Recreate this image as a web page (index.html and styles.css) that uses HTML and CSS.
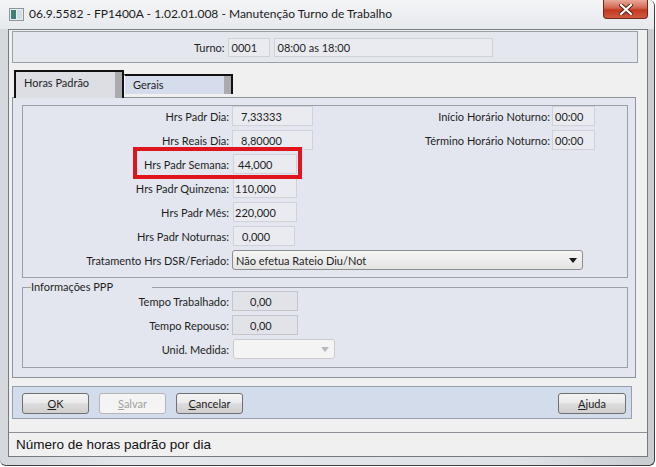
FILE: index.html
```html
<!DOCTYPE html>
<html lang="pt">
<head>
    <meta charset="UTF-8">
    <title>Manutenção Turno de Trabalho</title>
    <link rel="stylesheet" href="styles.css">
</head>
<body>
    <div class="window">
        <div class="titlebar">
            <svg class="app-icon" width="15" height="13" viewBox="0 0 15 13">
                <rect x="0.5" y="0.5" width="14" height="12" fill="#e9eef0" stroke="#8a9599"/>
                <rect x="2" y="2" width="5" height="9" fill="#3f7f78"/>
                <rect x="8" y="2" width="5" height="9" fill="#d2dde0"/>
            </svg>
            <span class="title">06.9.5582 - FP1400A - 1.02.01.008 - Manutenção Turno de Trabalho</span>
            <div class="close-btn">
                <svg width="14" height="11" viewBox="0 0 14 11">
                    <path d="M2 1 L12 10 M12 1 L2 10" stroke="#5a1a10" stroke-width="4" stroke-linecap="square"/>
                    <path d="M2 1 L12 10 M12 1 L2 10" stroke="#ffffff" stroke-width="2.2" stroke-linecap="square"/>
                </svg>
            </div>
        </div>

        <div class="client">
            <div class="turno-panel">
                <span class="label">Turno:</span>
                <div class="field turno-code">0001</div>
                <div class="field turno-desc">08:00 as 18:00</div>
            </div>

            <div class="tabs">
                <div class="tab active">Horas Padrão</div>
                <div class="tab">Gerais</div>
            </div>

            <div class="tab-page">
                <div class="box-hours">
                    <div class="hours-top">
                        <div class="col-left">
                            <div class="form-row">
                                <span class="label">Hrs Padr Dia:</span>
                                <div class="field wide pad-8">7,33333</div>
                            </div>
                            <div class="form-row">
                                <span class="label">Hrs Reais Dia:</span>
                                <div class="field wide pad-8">8,80000</div>
                            </div>
                            <div class="form-row">
                                <span class="label">Hrs Padr Semana:</span>
                                <div class="field mid pad-4">44,000</div>
                            </div>
                            <div class="form-row">
                                <span class="label">Hrs Padr Quinzena:</span>
                                <div class="field mid pad-2">110,000</div>
                            </div>
                            <div class="form-row">
                                <span class="label">Hrs Padr Mês:</span>
                                <div class="field mid pad-2">220,000</div>
                            </div>
                            <div class="form-row">
                                <span class="label">Hrs Padr Noturnas:</span>
                                <div class="field mid narrow pad-8">0,000</div>
                            </div>
                        </div>
                        <div class="col-right">
                            <div class="form-row">
                                <span class="label">Início Horário Noturno:</span>
                                <div class="field time">00:00</div>
                            </div>
                            <div class="form-row">
                                <span class="label">Término Horário Noturno:</span>
                                <div class="field time">00:00</div>
                            </div>
                        </div>
                    </div>
                    <div class="form-row last">
                        <span class="label">Tratamento Hrs DSR/Feriado:</span>
                        <div class="combo">
                            <span>Não efetua Rateio Diu/Not</span>
                            <span class="arrow"></span>
                        </div>
                    </div>
                    <div class="highlight"></div>
                </div>

                <div class="group">
                    <span class="group-title">Informações PPP</span>
                    <div class="form-row">
                        <span class="label">Tempo Trabalhado:</span>
                        <div class="field ppp">0,00</div>
                    </div>
                    <div class="form-row">
                        <span class="label">Tempo Repouso:</span>
                        <div class="field ppp">0,00</div>
                    </div>
                    <div class="form-row last">
                        <span class="label">Unid. Medida:</span>
                        <div class="combo disabled">
                            <span></span>
                            <span class="arrow"></span>
                        </div>
                    </div>
                </div>
            </div>

            <div class="button-bar">
                <button class="btn"><u>O</u>K</button>
                <button class="btn" disabled><u>S</u>alvar</button>
                <button class="btn"><u>C</u>ancelar</button>
                <button class="btn help"><u>A</u>juda</button>
            </div>

            <div class="status">Número de horas padrão por dia</div>
        </div>
    </div>
</body>
</html>
```

FILE: styles.css
```css
* {
    box-sizing: border-box;
}
body {
    margin: 0;
    background-color: #ffffff;
    font-family: Lato, "Open Sans", sans-serif;
    font-size: 11px;
    color: #1e1e1e;
}
.window {
    width: 655px;
    height: 466px;
    display: flex;
    flex-direction: column;
    background: linear-gradient(to right, #d4d8dd, #e4e7eb 20%, #dfe3e7 80%, #c9cdd2);
    border-right: 1px solid #3d3f42;
    border-bottom: 1px solid #3d3f42;
    border-radius: 0 6px 6px 6px;
    overflow: hidden;
}
.titlebar {
    height: 29px;
    display: flex;
    align-items: flex-start;
    background: linear-gradient(#f4f5f7, #e6e9ed);
}
.app-icon {
    margin: 8px 0 0 9px;
}
.title {
    margin: 6px 0 0 5px;
    font-size: 12px;
    color: #1b1b1b;
    white-space: nowrap;
}
.close-btn {
    margin-left: auto;
    margin-right: 6px;
    width: 45px;
    height: 19px;
    display: flex;
    justify-content: center;
    align-items: center;
    background: linear-gradient(#e9a999, #d2654f 45%, #c2391f 55%, #d05a3f);
    border: 1px solid #6e2a1f;
    border-top: none;
    border-radius: 0 0 4px 4px;
}
.client {
    flex: 1;
    margin: 0 6px 8px 8px;
    display: flex;
    flex-direction: column;
    background-color: #f0f0f0;
    border: 1px solid #767b82;
}
.label {
    white-space: nowrap;
}
.field {
    height: 20px;
    display: flex;
    align-items: center;
    padding-left: 8px;
    background-color: #e9ebf0;
    border: 1px solid #cfd2d8;
    white-space: nowrap;
}

/* painel do turno */
.turno-panel {
    height: 32px;
    margin: 1px 9px 0 3px;
    display: flex;
    align-items: center;
    padding-left: 181px;
    background-color: #e4e7ee;
    border: 1px solid #9aa0a8;
}
.turno-panel .label {
    margin-right: 3px;
}
.turno-panel .field {
    height: 19px;
    padding-left: 3px;
}
.turno-code {
    width: 42px;
    margin-right: 4px;
}
.turno-desc {
    width: 219px;
}

/* abas */
.tabs {
    height: 28px;
    margin: 6px 0 0 5px;
    display: flex;
    align-items: flex-end;
    position: relative;
    z-index: 1;
}
.tab {
    height: 20px;
    width: 109px;
    margin-bottom: 3px;
    padding: 0 0 2px 8px;
    display: flex;
    align-items: center;
    background-color: #d5dcec;
    border-top: 2px solid #111;
    border-right: 2px solid #111;
    border-left: 1px solid #f4f6fa;
    box-shadow: inset -7px 0 0 #a9abaf;
}
.tab.active {
    height: 28px;
    width: 110px;
    margin-bottom: -1px;
    padding-bottom: 5px;
    background-color: #dcdee3;
    border-left: 2px solid #111;
    border-right: 2px solid #111;
}
.tab-page {
    margin: 0 11px 0 3px;
    padding: 7px 7px 9px 9px;
    background-color: #e3e6ee;
    border: 1px solid #8d939b;
}

/* quadro horas */
.box-hours {
    position: relative;
    padding-bottom: 7px;
    border: 1px solid #9aa0a8;
}
.hours-top {
    display: flex;
}
.col-left {
    width: 317px;
}
.col-right {
    flex: 1;
}
.form-row {
    height: 20px;
    margin-bottom: 4px;
    display: flex;
    align-items: center;
}
.form-row.last {
    margin-bottom: 0;
}
.col-left .label,
.box-hours > .form-row .label,
.group .label {
    width: 206px;
    margin-right: 3px;
    text-align: right;
}
.col-right .label {
    width: 210px;
    margin-right: 2px;
    text-align: right;
}
.field.wide {
    width: 81px;
}
.field.mid {
    width: 64px;
    margin-left: 1px;
}
.field.narrow {
    width: 62px;
}
.field.time {
    width: 43px;
    padding-left: 2px;
}
.pad-8 {
    padding-left: 8px;
}
.pad-4 {
    padding-left: 4px;
}
.pad-2 {
    padding-left: 1px;
}
.combo {
    width: 351px;
    height: 20px;
    display: flex;
    align-items: center;
    justify-content: space-between;
    padding: 0 5px 0 3px;
    background: linear-gradient(#f6f6f6, #e4e4e4);
    border: 1px solid #8c8d90;
    border-radius: 3px;
}
.arrow {
    width: 0;
    height: 0;
    border-left: 4px solid transparent;
    border-right: 4px solid transparent;
    border-top: 5px solid #1a1a1a;
}
.combo.disabled {
    width: 102px;
    margin-left: 1px;
    background: #f4f4f5;
    border-color: #c9cbce;
}
.combo.disabled .arrow {
    border-top-color: #b7b9bc;
}
.highlight {
    position: absolute;
    left: 110px;
    top: 41px;
    width: 169px;
    height: 32px;
    border: 4px solid #e0141d;
}

/* grupo PPP */
.group {
    position: relative;
    margin-top: 9px;
    padding: 3px 0 8px;
    border: 1px solid #9aa0a8;
}
.group-title {
    position: absolute;
    top: -8px;
    left: 8px;
    width: 121px;
    background-color: #e3e6ee;
}
.field.ppp {
    width: 66px;
    padding-left: 17px;
    background-color: #e1e3e8;
    border-color: #c3c6cb;
}

/* botoes */
.button-bar {
    height: 33px;
    margin: 8px 15px 0 3px;
    padding: 6px 5px 0 9px;
    display: flex;
    align-items: flex-start;
    gap: 10px;
    background-color: #d3dcea;
    border: 1px solid #97a1ae;
}
.btn {
    width: 67px;
    height: 21px;
    padding: 0;
    font-family: Lato, "Open Sans", sans-serif;
    font-size: 11px;
    color: #1e1e1e;
    background: linear-gradient(#f3f3f3, #ebebeb 45%, #dddddd 50%, #cfcfcf);
    border: 1px solid #707070;
    border-radius: 3px;
}
.btn:disabled {
    color: #a0a0a0;
    background: #f4f4f4;
    border-color: #b5b5b5;
}
.btn.help {
    margin-left: auto;
    width: 68px;
}
.status {
    margin-top: auto;
    height: 24px;
    padding: 4px 0 0 7px;
    font-family: "Liberation Sans", Arial, sans-serif;
    font-size: 13.5px;
    color: #111;
    border-top: 1px solid #8d9096;
}
```
